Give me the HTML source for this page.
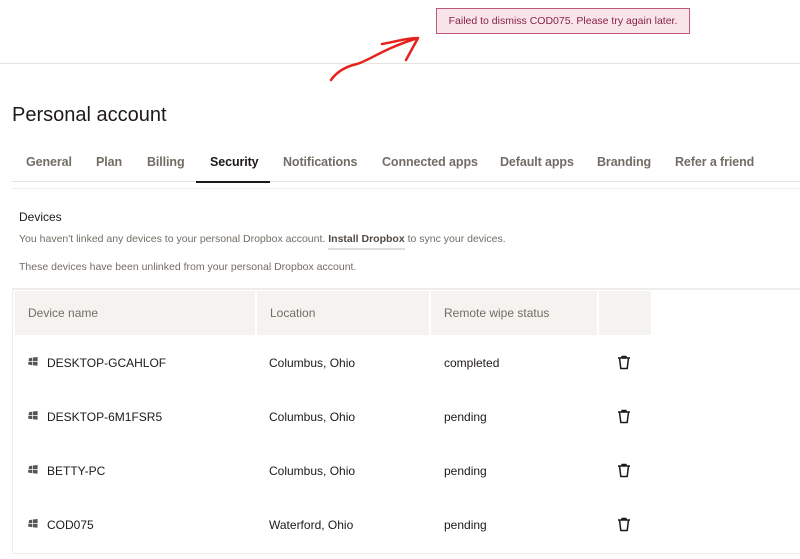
<!DOCTYPE html>
<html><head><meta charset="utf-8"><style>
*{margin:0;padding:0;box-sizing:border-box}
body{width:800px;height:559px;background:#fff;font-family:"Liberation Sans",sans-serif;position:relative;overflow:hidden;color:#1e1919}
.a{position:absolute;white-space:nowrap}
.tab{position:absolute;top:155px;font-size:12.5px;font-weight:bold;color:#736c64;letter-spacing:-0.1px}
.hd{position:absolute;top:291px;height:44px;background:#f5f3f0;font-size:12px;color:#736c64;padding:15px 0 0 13px}
.row{font-size:12px;color:#1e1919}
</style></head><body>
<div class="a" style="left:0;top:63px;width:800px;height:1px;background:#e6e4e1"></div>
<div class="a" style="left:436px;top:8px;width:254px;height:26px;background:#f7e5ea;border:1px solid #c4577c;color:#8a2148;font-size:10.5px;text-align:center;line-height:24px">Failed to dismiss COD075. Please try again later.</div>
<svg class="a" style="left:0;top:0" width="800" height="100"><path d="M331 80 C338 70,348 66,357 64 C370 60,385 48,418 38 M418 38 L406 60 M418 38 C405 38,395 42,382 44" fill="none" stroke="#e5221b" stroke-width="2.5" stroke-linecap="round" stroke-linejoin="round"/></svg>
<div class="a" style="left:12px;top:104px;font-size:20px;color:#1e1919">Personal account</div>
<div class="tab" style="left:26px">General</div>
<div class="tab" style="left:96px">Plan</div>
<div class="tab" style="left:147px">Billing</div>
<div class="tab" style="left:210px;color:#1e1919">Security</div>
<div class="tab" style="left:283px">Notifications</div>
<div class="tab" style="left:382px">Connected apps</div>
<div class="tab" style="left:500px">Default apps</div>
<div class="tab" style="left:597px">Branding</div>
<div class="tab" style="left:675px">Refer a friend</div>
<div class="a" style="left:12px;top:181px;width:788px;height:1px;background:#e6e4e1"></div>
<div class="a" style="left:196px;top:181px;width:74px;height:2px;background:#1e1919"></div>
<div class="a" style="left:12px;top:188px;width:788px;height:1px;background:#efede9"></div>
<div class="a" style="left:19px;top:210px;font-size:12px">Devices</div>
<div class="a" style="left:19px;top:233px;font-size:10.5px;color:#736c64">You haven't linked any devices to your personal Dropbox account. <b style="color:#524a44;border-bottom:2px solid #ddd;padding-bottom:3px">Install Dropbox</b> to sync your devices.</div>
<div class="a" style="left:19px;top:261px;font-size:10.5px;color:#736c64">These devices have been unlinked from your personal Dropbox account.</div>
<div class="a" style="left:12px;top:288px;width:788px;height:266px;border-top:2px solid #efede9;border-left:1px solid #efede9;border-bottom:1px solid #efede9"></div>
<div class="hd" style="left:15px;width:240px">Device name</div>
<div class="hd" style="left:257px;width:172px">Location</div>
<div class="hd" style="left:431px;width:166px">Remote wipe status</div>
<div class="hd" style="left:599px;width:52px"></div>

<svg class="a" style="left:28px;top:357px" width="10" height="9" viewBox="0 0 10 9"><path d="M1 1.2L4.3 0.6V4H0.6Z M5 0.5L9.6 0V4H5Z M0.5 4.7H4.3V8.2L0 7.5Z M5 4.7H9.5V8.8L5 8.2Z" fill="#555"/></svg>
<div class="a row" style="left:47px;top:356px">DESKTOP-GCAHLOF</div>
<div class="a row" style="left:269px;top:356px">Columbus, Ohio</div>
<div class="a row" style="left:444px;top:356px">completed</div>
<svg class="a" style="left:28px;top:411px" width="10" height="9" viewBox="0 0 10 9"><path d="M1 1.2L4.3 0.6V4H0.6Z M5 0.5L9.6 0V4H5Z M0.5 4.7H4.3V8.2L0 7.5Z M5 4.7H9.5V8.8L5 8.2Z" fill="#555"/></svg>
<div class="a row" style="left:47px;top:410px">DESKTOP-6M1FSR5</div>
<div class="a row" style="left:269px;top:410px">Columbus, Ohio</div>
<div class="a row" style="left:444px;top:410px">pending</div>
<svg class="a" style="left:28px;top:465px" width="10" height="9" viewBox="0 0 10 9"><path d="M1 1.2L4.3 0.6V4H0.6Z M5 0.5L9.6 0V4H5Z M0.5 4.7H4.3V8.2L0 7.5Z M5 4.7H9.5V8.8L5 8.2Z" fill="#555"/></svg>
<div class="a row" style="left:47px;top:464px">BETTY-PC</div>
<div class="a row" style="left:269px;top:464px">Columbus, Ohio</div>
<div class="a row" style="left:444px;top:464px">pending</div>
<svg class="a" style="left:28px;top:519px" width="10" height="9" viewBox="0 0 10 9"><path d="M1 1.2L4.3 0.6V4H0.6Z M5 0.5L9.6 0V4H5Z M0.5 4.7H4.3V8.2L0 7.5Z M5 4.7H9.5V8.8L5 8.2Z" fill="#555"/></svg>
<div class="a row" style="left:47px;top:518px">COD075</div>
<div class="a row" style="left:269px;top:518px">Waterford, Ohio</div>
<div class="a row" style="left:444px;top:518px">pending</div>

<svg class="a" style="left:617px;top:355px" width="14" height="15" viewBox="0 0 14 15"><path d="M1 3H13M5 3V1.5H9V3M2.5 3L3.8 13.5H10.2L11.5 3" fill="none" stroke="#1e1919" stroke-width="1.5" stroke-linejoin="round"/></svg>
<svg class="a" style="left:617px;top:409px" width="14" height="15" viewBox="0 0 14 15"><path d="M1 3H13M5 3V1.5H9V3M2.5 3L3.8 13.5H10.2L11.5 3" fill="none" stroke="#1e1919" stroke-width="1.5" stroke-linejoin="round"/></svg>
<svg class="a" style="left:617px;top:463px" width="14" height="15" viewBox="0 0 14 15"><path d="M1 3H13M5 3V1.5H9V3M2.5 3L3.8 13.5H10.2L11.5 3" fill="none" stroke="#1e1919" stroke-width="1.5" stroke-linejoin="round"/></svg>
<svg class="a" style="left:617px;top:517px" width="14" height="15" viewBox="0 0 14 15"><path d="M1 3H13M5 3V1.5H9V3M2.5 3L3.8 13.5H10.2L11.5 3" fill="none" stroke="#1e1919" stroke-width="1.5" stroke-linejoin="round"/></svg>
</body></html>
